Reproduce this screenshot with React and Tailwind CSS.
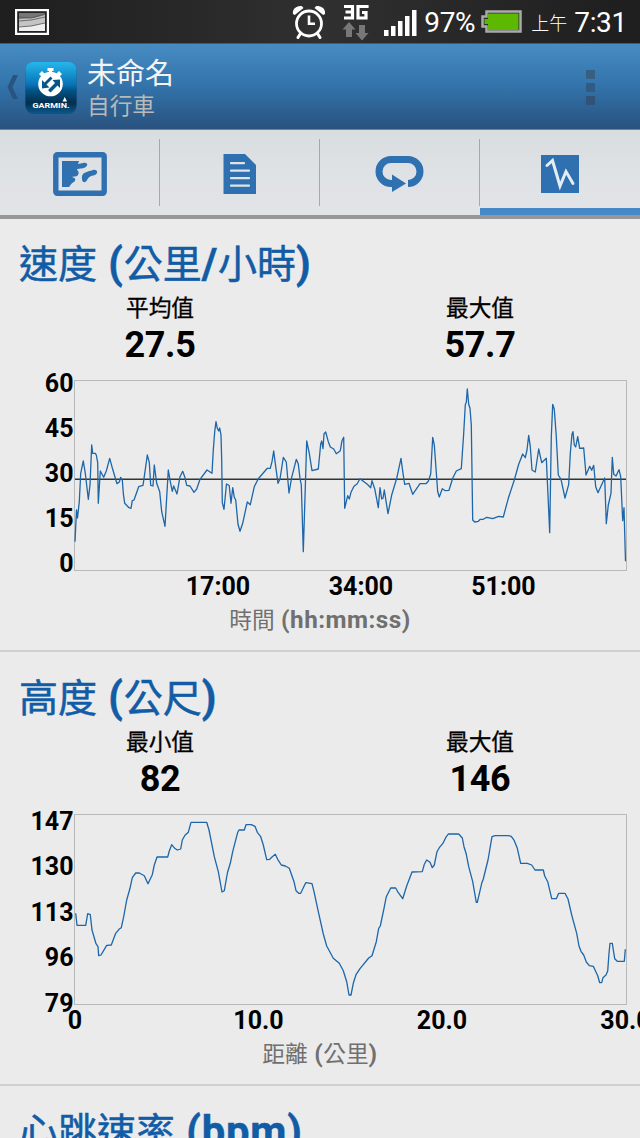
import React from 'react';

const SPEED_POINTS = `0,161.7 1.5,130 2.5,138 4.3,121.7 5.7,93.3 8.3,81 10.3,93.3 13.3,119.3 15,105 16.7,65 17.7,73.3 20.3,73.3
21.3,75 22.7,82.7 23.3,123.3 25.3,91 28.7,97.3 31.3,91 34.7,78.3 37.7,89.3 42,103.7 44.3,102 45.7,97.3 47.3,100 48.3,113.3
49.7,123.3 54,127.7 56,128.3 57.3,120.7 59,120 63.7,106.7 68,105.3 70,91.7 72.3,75 74.3,82.3 75.7,105.3 78,106 79.3,85
81.7,103.3 84.7,111.7 86.7,131.7 90,146.3 93.3,90 95.3,101.7 97.3,111.3 98.7,106 102,114 105,96.7 107.7,91.3 109.7,96.7
111.7,105.3 115,106 119,112.3 121.7,109 125,99.3 132,90 137,93.3 138.3,70 139.7,51.7 141,41.7 142.3,48.3 143.7,51 144.7,48
146,55 146.7,80 147.3,122.7 149,129.3 151.5,104 154.2,105.5 156,123.3 157.7,107.7 159.3,117.3 160.7,120 163,144.3 165,151.3
167.7,143.3 172.3,122 175.3,124.7 179.3,106.7 183.3,98.7 192.3,88.3 195.3,88.3 197,81.7 198.7,71 200.7,86.7 203,103.3 205,99
208.3,77.3 211.3,82 214,113 216.7,97.3 221.3,79.3 223.3,84 225,98.3 226.3,105 228.3,171.7 230,116.7 231.7,61 234.3,73.3
237,90.7 243.3,89 245.7,64 246.7,61 248,68.7 249,54 250.7,52 253.3,61.7 255.3,67 258.7,69 261.3,73.7 265.3,70.7 267,60.7
268.7,57.3 269.7,128.3 272.7,115.7 274.3,119 276,112.3 279,106.3 282,104 285,98.7 292.3,104.3 295.7,107.7 297,100.7
299.7,108.7 303.3,127.7 305,107.7 306.7,119 308,118.3 309.3,110 313,133.7 316.7,115 321.7,98.3 326,78.3 328,93.3 329.7,104.3
334,103.3 337.7,114.3 345,103.7 351,103.7 353.3,101.3 355.7,94 357.7,57.3 359.3,65 362.7,111.7 364.3,117 367.3,108.7
370.3,110.7 374,110.3 377.7,98.3 381.3,91 386.3,88.7 388.7,53.3 390.3,24.7 391.3,22.3 392.3,9 393.7,24.3 395,28.3 396.3,45
397.7,140 399.7,142 403.3,141.3 405.3,139.3 408.3,139.3 411.7,137.3 417.7,138.7 423.7,136.3 428.3,137 433.3,118.3 439.3,100
443.7,84.3 447.7,74 450.3,77.7 452,70 453.7,55.3 455.3,66.7 457,90 460.3,92 463.7,69 466.7,82.7 471.3,78.3 474.7,152.7
476.3,56.7 477.7,24.3 479.3,29.3 481.3,56.7 483.3,95 486,99.3 490,118 493.7,104.3 495.3,73.3 497,54 498,51.7 499.3,65
500.7,67 502.7,56.7 504.7,68.3 508.7,68 511,95 514.7,86.3 516.7,90.3 518.7,85.3 520.7,106.7 523,112.7 529.7,98 531.3,143.7
533.3,125 536,113.3 537.3,77.3 538.7,94.3 541,96 544,89.7 545.7,96.7 547.7,140.7 549,127.7 550.5,181.3`;

const ELEVATION_POINTS = `0.7,99.3 2,111.3 10.7,111.3 12.7,99.7 15.3,100.7 17,116 21,129.7 23,132.7 23.7,141.7 26,141 31.7,131.3
36.3,131 40.7,119.3 44,115.3 46.3,113.7 48.7,102.7 51.7,86 55,74.3 57.3,63.7 60.7,59 64.3,59 69.3,61.7 73,69.7 77.3,60.7
79.3,51 82,43 92.7,43 94.3,37 96.7,30.7 99.7,34.3 102.3,36 105.7,35 107.3,26 110,21.3 113.3,18.3 116,8.3 131.7,8.3 134,16
139.3,42.7 143.3,57.7 147,78 149.3,76.7 152.5,58.5 155.3,49.3 157.7,37.7 162.7,18.3 164,16 169.3,16 171,10.7 176.3,10.7
180,12.3 182.3,18.3 185.7,22.7 188.3,31 191.7,45.7 194.7,45.3 197.3,42.7 200.3,40.3 202.7,45.3 206.3,51 210.3,52 214.3,54.3
219,67.7 221,76.7 223.7,79.3 225.7,79.3 230.7,68.7 237,69.7 239,77.7 243.7,99.3 248.3,120 251.7,132 258.3,144.3 264.3,149.3
268.3,156.7 271.7,167.7 274,181 276,181 278.3,169.3 281,160.7 285,154.7 293.7,144 297,141.7 301.3,127.7 303.7,114.3
305.3,112 309,94.3 311.3,82.7 315.7,74 320.7,74 323.3,78.7 327.7,84.7 331.7,72 337,58 347.3,57.7 349.3,50.3 351.7,46
355,48.3 357.3,53.7 359.3,51 362,37.7 364.3,33.7 367.7,29.7 370.7,23.7 373.3,20 383.7,20 387.3,24 389,32.7 391.3,40.3
393.7,52.7 397.7,67.7 401.3,88.3 402.3,88.3 406.7,69.3 408.3,65 413,46 417,22.7 420,21.7 433.3,21.7 436.3,22.3 439.3,26.7
442.3,34.3 445.7,49.3 452.3,49.3 456.7,51 460,56 468.3,56 469.7,62 472.7,67.7 476.7,84.7 481.3,84.7 483.7,79.3 490,79.3
493,85 496.7,101 501.7,119.3 504,132 506,137.3 508.7,141 511.3,148 514.3,151.7 518.3,152.3 522.7,161.7 524.7,168.7
526.7,168.7 528,163.7 531,161 532.7,157 534,139.3 535,129.3 537.3,129.3 539.7,144.7 542.3,147.3 549.3,147.3 550.3,135.3`;

const CHARTS = [
  {
    title: ['速度', ' (', '公里', '/', '小時', ')'],
    stats: [['平均值', '27.5'], ['最大值', '57.7']],
    points: SPEED_POINTS,
    average: 99,
    yTicks: [['60', 12], ['45', 57], ['30', 102], ['15', 147], ['0', 192]],
    xTicks: [['17:00', 143], ['34:00', 286], ['51:00', 428.5]],
    caption: ['時間', ' (hh:mm:ss)'],
  },
  {
    title: ['高度', ' (', '公尺', ')'],
    stats: [['最小值', '82'], ['最大值', '146']],
    points: ELEVATION_POINTS,
    yTicks: [['147', 16], ['130', 61], ['113', 106.5], ['96', 152], ['79', 197.5]],
    xTicks: [['0', 0], ['10.0', 183.5], ['20.0', 367], ['30.0', 550.5]],
    caption: ['距離', ' (', '公里', ')'],
  },
];

// Android mixes bold Latin with a lighter, slightly smaller CJK fallback face
const MixedText = ({ parts }) =>
  parts.map((part, i) =>
    /[\u4e00-\u9fff]/.test(part) ? (
      <span key={i} className="font-normal">{part}</span>
    ) : (
      <span key={i} className="text-[1.07em] font-bold tracking-[0.02em]">{part}</span>
    )
  );

const AlarmIcon = () => (
  <svg width="34" height="34" viewBox="0 0 34 34" fill="none" stroke="#fff">
    <circle cx="17" cy="18.5" r="12.5" strokeWidth="2.8" />
    <path d="M17 10.5v8.3h6" strokeWidth="2.6" />
    <path d="M8.5 28.5 6 32.5M25.5 28.5 28 32.5" strokeWidth="3" strokeLinecap="round" />
    <path d="M1 9C0 4 5 0 10 1.2L11.5 3 2.8 10ZM33 9C34 4 29 0 24 1.2L22.5 3 31.2 10Z" fill="#fff" stroke="none" />
  </svg>
);

const StatusBar = () => (
  <div className="flex h-[44px] shrink-0 items-center border-b border-[#565656] bg-linear-to-r from-[#1e1e1e] via-[#303030] to-[#1e1e1e] pl-[15px] pr-[13px] text-white">
    <svg className="mt-px" width="34" height="26" viewBox="0 0 34 26">
      <rect x="1" y="1" width="32" height="24" fill="#222" stroke="#fff" strokeWidth="2.4" />
      <path d="M4 4h26v18H4z" fill="#c4c4c4" />
      <path d="M4 4h26v2L19 9 4 10z" fill="#777" />
      <path d="M4 18l14-1 12-3v8H4z" fill="#eee" />
      <path d="M4 8l12 1 14-4M4 12l12-1 14-3M4 18l12-1 14-3" fill="none" stroke="#555" strokeWidth=".8" />
    </svg>
    <div className="ml-auto flex items-center">
      <AlarmIcon />
      <svg className="ml-[16px] mt-px" width="28" height="38" viewBox="0 0 28 38">
        <path d="M2 3.5h8.5V15H2M3.5 9h7M25 5V3.5h-9V15h8V9.5h-4" fill="none" stroke="#fff" strokeWidth="3.2" />
        <path d="M7 19l6.5 7.5H10V34H4v-7.5H.5zM20 37.5l-6.5-7.5H17V22h6v8h3.5z" fill="#777" />
      </svg>
      <svg className="ml-[14px] mt-[3px]" width="33" height="26" viewBox="0 0 33 26">
        <path d="M0 20h4.5v6H0zM7 16h4.5v10H7zM14 11h4.5v15H14zM21 6h4.5v20H21zM28 0h4.5v26H28z" fill="#fff" />
      </svg>
      <span className="ml-[7px] mt-[3px] w-[57px] whitespace-nowrap text-[28px] leading-none tracking-[-0.3px]">97%</span>
      <svg className="mt-px" width="41" height="24" viewBox="0 0 41 24">
        <path d="M5.5 1.5h34v20h-34v-5h-4v-10h4z" fill="#303030" stroke="#aaa" strokeWidth="2.5" />
        <path d="M7 3.5h30.5v16.5H7v-6H3.5v-5H7z" fill="#5cb800" />
      </svg>
      <span className="ml-[9px] mt-[5px] text-[18px] font-light leading-none">上午</span>
      <span className="ml-[7px] mt-[2px] text-[28px] leading-none tracking-[-0.3px]">7:31</span>
    </div>
  </div>
);

const ConnectLogo = () => (
  <svg width="52" height="54" viewBox="0 0 52 54">
    <defs>
      <linearGradient id="tile" x1="0" y1="0" x2="0" y2="1">
        <stop offset="0" stopColor="#25b7ec" />
        <stop offset=".45" stopColor="#0872b4" />
        <stop offset=".55" stopColor="#035487" />
        <stop offset=".8" stopColor="#032f4e" />
        <stop offset="1" stopColor="#07578a" />
      </linearGradient>
    </defs>
    <rect x=".5" y="2" width="51" height="51" rx="8" fill="#1d4f7c" />
    <rect x=".5" y="1" width="51" height="51" rx="8" fill="url(#tile)" />
    <circle cx="25.5" cy="23" r="12.3" fill="#fff" />
    <path d="M22.5 7h6v3h-1.5v2h-3v-2h-1.5zM14 13l3-3 3 3-3 3zM31 13l3-3 3 3-3 3z" fill="#fff" />
    <path d="M17 27.5V19l2.5 2.5 6-6 2 2-6 6 3 3zM35 18.5V27l-2.5-2.5-7 7-2.5-2.5 7-7-2.5-3z" fill="#07558b" />
    <path d="M37.5 40.5l2.2-4.5 2.3 4.5z" fill="#fff" />
    <text x="7.5" y="46.5" textLength="37" lengthAdjust="spacingAndGlyphs" fontSize="7.5" fontWeight="700" fill="#fff">GARMIN.</text>
  </svg>
);

const Header = () => (
  <header className="flex h-[86px] shrink-0 items-center border-b border-[#6186ac] bg-linear-to-b from-[#468cc3] via-[#3273aa] to-[#29527f] pl-[7px] pr-[45px]">
    <svg width="12" height="26" viewBox="0 0 12 26">
      <path d="M6 1h5L5.5 13 11 25H6L.5 13z" fill="#28557f" />
    </svg>
    <div className="ml-[6px] mt-[2px]">
      <ConnectLogo />
    </div>
    <div className="ml-[10px] mt-[5px] flex flex-col">
      <span className="text-[29px] leading-[34px] text-[#f3f3f3]">未命名</span>
      <span className="mt-px text-[22.7px] leading-[30px] text-[#b9bab8]">自行車</span>
    </div>
    <div className="ml-auto mt-px flex flex-col gap-[4px]">
      <i className="size-[9px] bg-[#365f82]" />
      <i className="size-[9px] bg-[#315b81]" />
      <i className="size-[9px] bg-[#315377]" />
    </div>
  </header>
);

const MapIcon = () => (
  <svg width="54" height="44" viewBox="0 0 54 44">
    <rect x="2.8" y="2.8" width="48.4" height="38.4" rx="1.5" fill="none" stroke="#2f70b0" strokeWidth="5.4" />
    <path d="M9 9h17l-1 3 5-1c5-1 6 3 1 5-3 1-7 0-7 2 2 1 2 3 1 5-1 2-4 1-6 2 4 1 4 3 2 5-3 1-3 3-5 5H9z" fill="#2f70b0" />
    <path d="M29 27c-1-7 5-7 11-9 4-1 6 3 2 5-5 1-6 2-8 5-1 3-5 3-5-1z" fill="#2f70b0" />
  </svg>
);

const DocumentIcon = () => (
  <svg width="34" height="40" viewBox="0 0 34 40">
    <path d="M.5 0H22l11 11v29H.5z" fill="#2f70b0" />
    <path d="M8 9.2h13M8 16.7h18M8 24.2h18M8 31.7h18" stroke="#e1e4e6" strokeWidth="2.2" strokeLinecap="round" />
  </svg>
);

const LapIcon = () => (
  <svg width="50" height="38" viewBox="0 0 50 38">
    <path d="M18 28.5h-2a12 12 0 0 1 0-24h17a12 12 0 0 1 0 24" fill="none" stroke="#2f70b0" strokeWidth="7" />
    <path d="M17 19.5 31 28.5 17 37z" fill="#2f70b0" />
  </svg>
);

const ChartIcon = () => (
  <svg width="38" height="38" viewBox="0 0 38 38">
    <path d="M0 0h38v38H0z" fill="#2f70b0" />
    <path d="M6 10.5 11.5 5.500 19 31 25 16.500 32 28.500" fill="none" stroke="#e5edf3" strokeWidth="3" strokeLinecap="round" />
  </svg>
);

const TABS = [MapIcon, DocumentIcon, LapIcon, ChartIcon];

const Tabs = () => (
  <nav className="-mb-px grid h-[89px] shrink-0 grid-cols-4 border-b-4 border-[#979797] bg-linear-to-b from-[#d8dddf] via-[#dfe2e5] to-[#e2e4e7]">
    {TABS.map((Icon, i) => {
      const active = i === TABS.length - 1;
      return (
        <div key={i} className="flex flex-col">
          <div className="flex h-[78px] items-end">
            <div className={`mb-[2px] flex h-[67px] flex-1 items-center justify-center pt-[3px] ${active ? '' : 'border-r border-[#a6a8aa]'}`}>
              <Icon />
            </div>
          </div>
          {active && <div className="h-[7px] bg-[#4689c8]" />}
        </div>
      );
    })}
  </nav>
);

const Plot = ({ chart }) => (
  <svg className="block shrink-0" width="640" height="228" viewBox="-75 -8 640 228">
    <rect x="-.5" y=".5" width="552" height="190" fill="none" stroke="#b9b9b9" />
    {chart.average && <path d={`M0 ${chart.average + 0.2}h551`} stroke="#303635" strokeWidth="1.5" />}
    <polyline points={chart.points} fill="none" stroke="#1d66a9" strokeWidth="1.3" strokeLinejoin="round" />
    <g fontSize="25" fontWeight="700" fill="#000">
      {chart.yTicks.map(([label, y]) => (
        <text key={label} x="-1.5" y={y} textAnchor="end">{label}</text>
      ))}
      {chart.xTicks.map(([label, x]) => (
        <text key={label} x={x} y="215" textAnchor="middle">{label}</text>
      ))}
    </g>
  </svg>
);

const Title = ({ parts }) => (
  <h2 className="h-[46px] whitespace-pre pl-[19px] text-[39px] leading-[46px] text-[#125ca6] [-webkit-text-stroke:0.5px_#125ca6]">
    <MixedText parts={parts} />
  </h2>
);

const ChartSection = ({ chart }) => (
  <section className="flex h-[434px] shrink-0 flex-col border-b-2 border-[#d0d0d0] pt-[23px]">
    <Title parts={chart.title} />
    <div className="mt-[8px] grid h-[77px] grid-cols-2 text-center text-black">
      {chart.stats.map(([label, value]) => (
        <div key={label} className="flex flex-col">
          <span className="text-[22.7px] leading-[28px] [-webkit-text-stroke:0.3px_black]">{label}</span>
          <span className="text-[36px] font-bold leading-[45px] tracking-[-0.4px]">{value}</span>
        </div>
      ))}
    </div>
    <Plot chart={chart} />
    <div className="mt-[3px] whitespace-pre text-center text-[22.7px] leading-[34px] text-[#707070]">
      <MixedText parts={chart.caption} />
    </div>
  </section>
);

export default function App() {
  return (
    <div className="flex h-[1138px] w-[640px] flex-col overflow-hidden bg-[#ebebeb] font-[Roboto,'Noto_Sans_CJK_TC',sans-serif]">
      <StatusBar />
      <Header />
      <Tabs />
      {CHARTS.map((chart) => (
        <ChartSection key={chart.title[0]} chart={chart} />
      ))}
      <section className="pt-[23px]">
        <Title parts={['心跳速率', ' (bpm)']} />
      </section>
    </div>
  );
}
